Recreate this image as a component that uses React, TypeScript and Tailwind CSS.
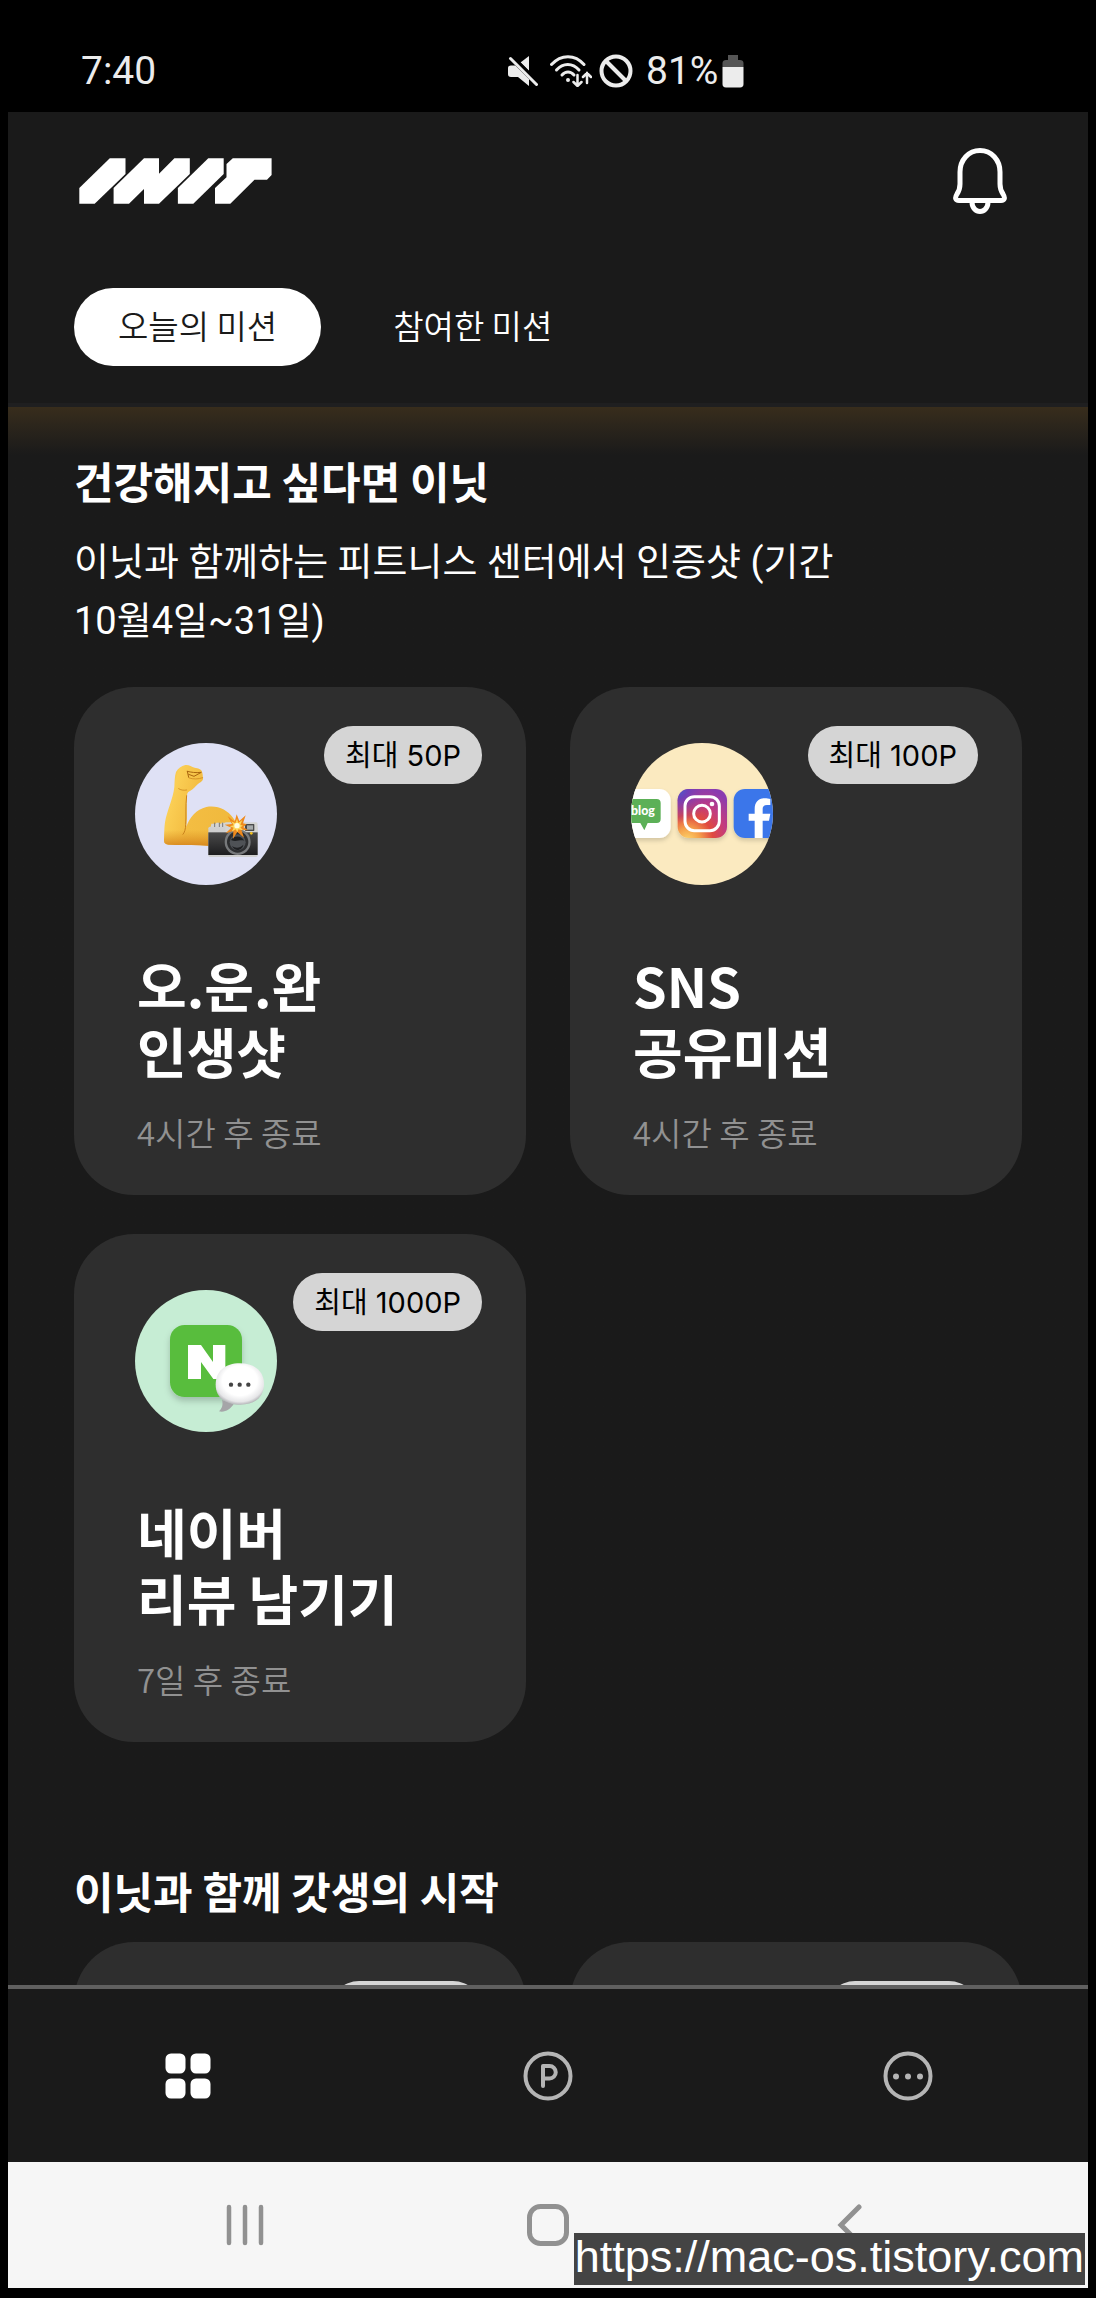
import type { ReactNode } from "react";

type Mission = {
  id: string;
  title: string[];
  badge: string;
  remaining: string;
  icon: ReactNode;
};

function StatusBar() {
  return (
    <div className="flex h-28 shrink-0 items-center bg-black pt-[30px] pl-[73px] font-[Roboto,sans-serif] text-[39px] leading-none text-[#ececec]">
      <span className="w-[419px]">7:40</span>
      <div className="flex items-center">
        <svg className="mr-3 ml-2 h-[30px] w-[30px]" viewBox="0 0 30 30" fill="#ececec" aria-label="Muted">
          <path d="M21 0v15L12.500 6.500Z" />
          <path d="M0 12.500c0-2 1-3 3-3h4.500L21 22.500V30L10 21H3c-2 0-3-1-3-3Z" />
          <path d="M2.500 2.500 28.500 28.500" stroke="#000" strokeWidth="6" transform="translate(1 -1)" />
          <path d="M2.500 2.500 28.500 28.500" stroke="#ececec" strokeWidth="3" strokeLinecap="round" />
        </svg>
        <svg className="mr-[7px] h-8 w-[42px]" viewBox="0 0 42 32" fill="none" stroke="#ececec" strokeWidth="3" strokeLinecap="round" aria-label="Wi-Fi">
          <path d="M1.500 9.500C11 -1 25 -1 34 9.500" />
          <path d="M6.500 15C13 7.500 22.500 7.500 29 15" />
          <path d="M12 20c3.500-4 8.500-4 12 0" />
          <circle cx="18" cy="25" r="1" fill="#ececec" strokeWidth="2" />
          <path d="M27.500 20v11m-4-4 4 4 4-4M37 28V18m-4 4 4-4 4 4" strokeWidth="2.500" />
        </svg>
        <svg className="mr-[13px] h-[34px] w-[34px]" viewBox="0 0 34 34" fill="none" stroke="#ececec" strokeWidth="4" aria-label="Blocked">
          <circle cx="17" cy="17" r="14.500" />
          <path d="M7 7 27 27" />
        </svg>
        <span>81%</span>
        <svg className="ml-1 h-[34px] w-[22px]" viewBox="0 0 22 34" aria-label="Battery">
          <path d="M6 1h10v5h2c2 0 3.500 1 3.500 3v4H.5V9c0-2 1.500-3 3.500-3h2Z" fill="#555" />
          <path d="M.5 13h21v17c0 2-1 3.500-3.500 3.500H4C1.500 33.500.5 32 .5 30Z" fill="#ececec" />
        </svg>
      </div>
    </div>
  );
}

function Logo() {
  return (
    <svg className="ml-[5px] h-[46px] w-[193px]" viewBox="0 0 193 46" fill="#fff" role="img" aria-label="INIT">
      <path d="M30.800.3h15.700V16L15.700 45.700H.3V30Z" />
      <path d="M65 .3h15v15.400L95.400.3h15.400V16L80 45.700H65V31L50 45.700H34.600V30Z" />
      <path d="M129.300.3h15.400V16l-30.400 29.700H98.900V30Z" />
      <path d="M153.800.3h38.800V17l-4.600 4.700h-12.500l-24.200 24H136V30l11.500-10.700V6Z" />
    </svg>
  );
}

function Header() {
  return (
    <header className="shrink-0 border-b-4 border-[#1f1f20] px-[66px] pt-9 pb-[37px]">
      <div className="flex items-center justify-between">
        <Logo />
        <button type="button" aria-label="알림" className="mr-[15px]">
          <svg className="h-[66px] w-[54px]" viewBox="0 0 54 66" fill="none" stroke="#fff" strokeWidth="5" strokeLinejoin="round">
            <path d="M27 2.500C15.500 2.500 7 12 7 24v12c0 5-1 7-3 10-2.500 4-1.500 6.500 2 6.500h42c3.500 0 4.500-2.500 2-6.500-2-3-3-5-3-10V24C47 12 38.500 2.500 27 2.500Z" />
            <path d="M19 54c0 6 4 9.500 8 9.500s8-3.500 8-9.500" />
          </svg>
        </button>
      </div>
      <nav className="mt-[74px] flex gap-7 text-[33px] leading-[74px] font-[350]">
        <button type="button" aria-current="page" className="rounded-full bg-white px-11 pb-1 text-[#1a1a1a]">
          오늘의 미션
        </button>
        <button type="button" className="rounded-full px-11 pb-1 text-white">
          참여한 미션
        </button>
      </nav>
    </header>
  );
}

const armOutline =
  "M168 186c6-10 16-19 28-21 12-1 18 5 28 8 10 2 20 4 22 12 3 8 2 15 3 20 1 8-8 12-16 18-6 6-12 14-22 19-6 3-9 5-10 14-3 30 2 62-2 94 10-28 30-52 60-59 34-6 62 8 80 32l20 30v45c-40 12-80 12-120 8-34-2-66 0-94-2-8-1-13-4-13-11 1-20 0-32 3-56 6-36 24-70 28-106 1-18 1-32 5-45Z";

function WorkoutIcon() {
  return (
    <svg className="size-full" viewBox="45 99 426 426" aria-hidden="true">
      <defs>
        <linearGradient id="arm" x1="0" y1="0" x2="1" y2="0.300">
          <stop offset="0" stopColor="#e5a52f" />
          <stop offset="0.200" stopColor="#fbcf55" />
          <stop offset="0.500" stopColor="#f3bd42" />
          <stop offset="1" stopColor="#f0b93d" />
        </linearGradient>
        <linearGradient id="armShade" x1="0" y1="0" x2="0" y2="1">
          <stop offset="0.800" stopColor="#d98a1c" stopOpacity="0" />
          <stop offset="1" stopColor="#d07a16" stopOpacity="0.800" />
        </linearGradient>
        <linearGradient id="body" x1="0" y1="0" x2="0" y2="1">
          <stop offset="0" stopColor="#4a4a4a" />
          <stop offset="1" stopColor="#1d1d1f" />
        </linearGradient>
      </defs>
      <path d={armOutline} fill="url(#arm)" />
      <path d={armOutline} fill="url(#armShade)" />
      <path d="M200 256c-4 34-1 62-3 88 0 12-3 24-9 30" fill="none" stroke="#c9821c" strokeWidth="3" />
      <path d="M202 184c12 3 24 5 42 3l-22 12-16-6M202 184l4 18" fill="none" stroke="#a9650f" strokeWidth="3" strokeLinecap="round" strokeLinejoin="round" />
      <path d="M208 204c12 4 26 4 40-1M176 236c6 4 14 6 24 4" fill="none" stroke="#cf8a20" strokeWidth="2.500" strokeLinecap="round" />
      <rect x="265" y="350" width="148" height="91" rx="5" fill="#cfcfcf" />
      <path d="M274 341h14v-3h10v3h6v-3h14v14h-46ZM316 337h92c4 0 5 3 5 7v28H316Z" fill="#d4d4d2" />
      <path d="M284 338v13m14-13v13m10-13v13" stroke="#777" strokeWidth="3" />
      <rect x="265" y="367" width="148" height="68" fill="url(#body)" />
      <rect x="375" y="342" width="28" height="21" rx="2" fill="#4b4b4b" />
      <rect x="381" y="346" width="18" height="13" fill="#a5a9a9" />
      <circle cx="394" cy="370" r="4" fill="#f6c21c" />
      <circle cx="353" cy="396" r="39" fill="#77797b" />
      <circle cx="353" cy="396" r="32" fill="#2d2e30" />
      <circle cx="353" cy="397" r="24" fill="#4f5256" />
      <path d="M333 390c10-14 30-14 40 2-14-4-26 6-40-2ZM336 408c12 8 24 6 34-4-2 18-26 22-34 4Z" fill="#1f2022" />
      <path d="m350 313 8 20 19-17-8 24 11 3-10 8 14 10-20-2 8 24-20-17-13 20 1-23-23 7 17-17-20-9 22-2-13-24 21 17Z" fill="#ef8a1d" />
      <path d="m351 326 4 13 12-9-6 14 8 3-8 5 8 9-14-3-3 9-5-9-12 7 6-12-12-4 12-3-7-12 12 6Z" fill="#fcd85d" />
      <circle cx="351" cy="347" r="8" fill="#fffbe0" />
    </svg>
  );
}

function SnsIcon() {
  return (
    <svg className="size-full" viewBox="211 129 426 426" aria-hidden="true">
      <defs>
        <radialGradient id="insta" cx="0.200" cy="1.050" r="1.150">
          <stop offset="0" stopColor="#fdd66c" />
          <stop offset="0.220" stopColor="#f5a04b" />
          <stop offset="0.450" stopColor="#e0493f" />
          <stop offset="0.700" stopColor="#c23b80" />
          <stop offset="1" stopColor="#8a3ab0" />
        </radialGradient>
        <radialGradient id="instaBlue" cx="0" cy="0" r="0.700">
          <stop offset="0" stopColor="#4062d0" />
          <stop offset="0.300" stopColor="#6a3fbc" stopOpacity="0.900" />
          <stop offset="1" stopColor="#8a3ab0" stopOpacity="0" />
        </radialGradient>
        <filter id="tileShadow" x="-20%" y="-20%" width="140%" height="150%">
          <feDropShadow dx="0" dy="8" stdDeviation="6" floodOpacity="0.160" />
        </filter>
      </defs>
      <rect x="182" y="267" width="148" height="147" rx="34" fill="#fff" filter="url(#tileShadow)" />
      <path d="M200 297h88c8 0 12 4 12 12v48c0 8-4 12-12 12h-27l-10 22-12-22h-39Z" fill="#5cb057" />
      <text x="211" y="345" fontFamily="Lato, sans-serif" fontWeight="900" fontSize="37" fill="#fff">
        blog
      </text>
      <rect x="351" y="267" width="148" height="147" rx="34" fill="url(#insta)" filter="url(#tileShadow)" />
      <rect x="351" y="267" width="148" height="147" rx="34" fill="url(#instaBlue)" />
      <rect x="373" y="290" width="103" height="102" rx="28" fill="none" stroke="#fff" strokeWidth="9" />
      <circle cx="424" cy="341" r="25" fill="none" stroke="#fff" strokeWidth="9" />
      <circle cx="454" cy="312" r="7" fill="#fff" />
      <rect x="519" y="267" width="148" height="147" rx="34" fill="#3a76ea" filter="url(#tileShadow)" />
      <path d="M582 414v-52h-18v-21h18v-13c0-22 12-33 30-33 7 0 12 1 17 2v18h-10c-9 0-13 5-13 12v14h23l-4 21h-19v52Z" fill="#fff" />
    </svg>
  );
}

function NaverIcon() {
  return (
    <svg className="size-full" viewBox="225 210 426 426" aria-hidden="true">
      <defs>
        <filter id="appShadow" x="-20%" y="-20%" width="140%" height="150%">
          <feDropShadow dx="0" dy="12" stdDeviation="10" floodOpacity="0.200" />
        </filter>
        <radialGradient id="bubble" cx="0.500" cy="0.420" r="0.600">
          <stop offset="0.600" stopColor="#fff" />
          <stop offset="0.850" stopColor="#e6e6e8" />
          <stop offset="1" stopColor="#a8a8ac" />
        </radialGradient>
      </defs>
      <rect x="330" y="315" width="216" height="216" rx="44" fill="#58bd3e" filter="url(#appShadow)" />
      <path d="M384 375h39l36 51v-51h37v102h-36l-37-51v51h-39Z" fill="#fff" />
      <path d="M486 540c4 14 0 26-9 34 18 4 34-6 44-22Z" fill="#a5a5a8" />
      <path d="M540 430c44 0 72 24 72 62s-26 62-70 62c-46 0-75-22-75-60 0-40 28-64 73-64Z" fill="url(#bubble)" />
      <circle cx="513" cy="494" r="6.500" fill="#444" />
      <circle cx="539" cy="494" r="6.500" fill="#444" />
      <circle cx="565" cy="494" r="6.500" fill="#444" />
    </svg>
  );
}

const missions: Mission[] = [
  {
    id: "workout",
    title: ["오.운.완", "인생샷"],
    badge: "최대 50P",
    remaining: "4시간 후 종료",
    icon: (
      <div className="size-[142px] overflow-hidden rounded-full bg-[#dfe1f5]">
        <WorkoutIcon />
      </div>
    ),
  },
  {
    id: "sns",
    title: ["SNS", "공유미션"],
    badge: "최대 100P",
    remaining: "4시간 후 종료",
    icon: (
      <div className="size-[142px] overflow-hidden rounded-full bg-[#fbeac0]">
        <SnsIcon />
      </div>
    ),
  },
  {
    id: "naver",
    title: ["네이버", "리뷰 남기기"],
    badge: "최대 1000P",
    remaining: "7일 후 종료",
    icon: (
      <div className="size-[142px] overflow-hidden rounded-full bg-[#c6edd4]">
        <NaverIcon />
      </div>
    ),
  },
];

function Badge({ children }: { children: ReactNode }) {
  return (
    <span className="rounded-full bg-[#d5d5d5] px-[21px] pt-0.5 font-[Inter,'Noto_Sans_CJK_KR',sans-serif] text-[29px] leading-[56px] whitespace-nowrap text-black">
      {children}
    </span>
  );
}

function MissionCard({ mission }: { mission: Mission }) {
  return (
    <a href={`#${mission.id}`} className="block rounded-[60px] bg-[#2e2e2e] pt-[39px] pr-11 pb-[41px] pl-[61px]">
      <div className="flex items-start justify-between">
        <div className="mt-[17px]">{mission.icon}</div>
        <Badge>{mission.badge}</Badge>
      </div>
      <div className="pl-0.5">
        <h3 className="mt-[67px] text-[54px] leading-[66px] font-bold text-white">
          {mission.title.map((line) => (
            <span key={line} className="block whitespace-nowrap">
              {line}
            </span>
          ))}
        </h3>
        <p className="mt-[26px] text-[33px] leading-[44px] font-[350] text-[#919191]">{mission.remaining}</p>
      </div>
    </a>
  );
}

function UpcomingCard() {
  return (
    <div className="flex min-h-[508px] items-start justify-end rounded-[60px] bg-[#2e2e2e] pt-[39px] pr-11">
      <Badge>최대 10P</Badge>
    </div>
  );
}

function TabBar() {
  return (
    <nav className="grid h-[177px] shrink-0 grid-cols-3 border-t-4 border-[#606060] bg-[#1a1a1a]">
      <button type="button" aria-label="미션" aria-current="page" className="flex items-center justify-center">
        <svg className="size-[46px]" viewBox="0 0 46 46" fill="#fff">
          <rect x="0.500" y="0.500" width="20" height="20" rx="5.500" />
          <rect x="25.500" y="0.500" width="20" height="20" rx="5.500" />
          <rect x="0.500" y="25.500" width="20" height="20" rx="5.500" />
          <rect x="25.500" y="25.500" width="20" height="20" rx="5.500" />
        </svg>
      </button>
      <button type="button" aria-label="포인트" className="flex items-center justify-center">
        <svg className="size-[50px]" viewBox="0 0 50 50" fill="none" stroke="#b5b5b5" strokeWidth="4" strokeLinecap="round" strokeLinejoin="round">
          <circle cx="25" cy="25" r="22.500" />
          <path d="M20 35V15h6.500a6 6 0 0 1 0 12.500H20" />
        </svg>
      </button>
      <button type="button" aria-label="더보기" className="flex items-center justify-center">
        <svg className="size-[50px]" viewBox="0 0 50 50" fill="#b5b5b5">
          <circle cx="25" cy="25" r="22.500" fill="none" stroke="#b5b5b5" strokeWidth="4" />
          <circle cx="13" cy="25.500" r="3" />
          <circle cx="25" cy="25.500" r="3" />
          <circle cx="37" cy="25.500" r="3" />
        </svg>
      </button>
    </nav>
  );
}

function SystemBar() {
  return (
    <div className="relative flex h-[126px] shrink-0 items-center justify-between bg-[#f6f6f6] px-[20%]">
      <button type="button" aria-label="최근 앱">
        <svg className="size-[42px]" viewBox="0 0 42 42" stroke="#919191" strokeWidth="4.500" strokeLinecap="round">
          <path d="M5 3v36M21 3v36M37 3v36" />
        </svg>
      </button>
      <button type="button" aria-label="홈">
        <svg className="size-[42px]" viewBox="0 0 42 42" fill="none" stroke="#919191" strokeWidth="5">
          <rect x="2.500" y="2.500" width="37" height="37" rx="11" />
        </svg>
      </button>
      <button type="button" aria-label="뒤로">
        <svg className="size-[42px]" viewBox="0 0 42 42" fill="none" stroke="#919191" strokeWidth="5" strokeLinecap="round" strokeLinejoin="miter">
          <path d="M29 3 11 21l18 18" />
        </svg>
      </button>
      <a
        href="https://mac-os.tistory.com"
        className="absolute right-[3px] bottom-[3px] bg-[#444] px-px pb-1 font-['Liberation_Sans',sans-serif] text-[45px] leading-[48px] text-white"
      >
        https://mac-os.tistory.com
      </a>
    </div>
  );
}

export default function App() {
  return (
    <div className="flex h-screen flex-col bg-black px-2 pb-[10px] font-['Noto_Sans_CJK_KR',sans-serif]">
      <StatusBar />
      <div className="flex min-h-0 flex-1 flex-col bg-[#1a1a1a] text-white">
        <Header />
        <main className="min-h-0 flex-1 overflow-hidden bg-linear-to-b from-[#382d1c] to-[#1a1a1a] to-[48px] px-[66px] pt-[46px]">
          <section>
            <h2 className="text-[43px] leading-[54px] font-bold">건강해지고 싶다면 이닛</h2>
            <p className="mt-[26px] font-[Roboto,'Noto_Sans_CJK_KR',sans-serif] text-[38px] leading-[59px]">
              이닛과 함께하는 피트니스 센터에서 인증샷 (기간
              <br />
              10월4일~31일)
            </p>
            <div className="mt-9 grid grid-cols-2 gap-x-11 gap-y-[39px]">
              {missions.map((mission) => (
                <MissionCard key={mission.id} mission={mission} />
              ))}
            </div>
          </section>
          <section className="mt-[121px]">
            <h2 className="text-[43px] leading-[54px] font-bold">이닛과 함께 갓생의 시작</h2>
            <div className="mt-[25px] grid grid-cols-2 gap-x-11">
              <UpcomingCard />
              <UpcomingCard />
            </div>
          </section>
        </main>
        <TabBar />
      </div>
      <SystemBar />
    </div>
  );
}
